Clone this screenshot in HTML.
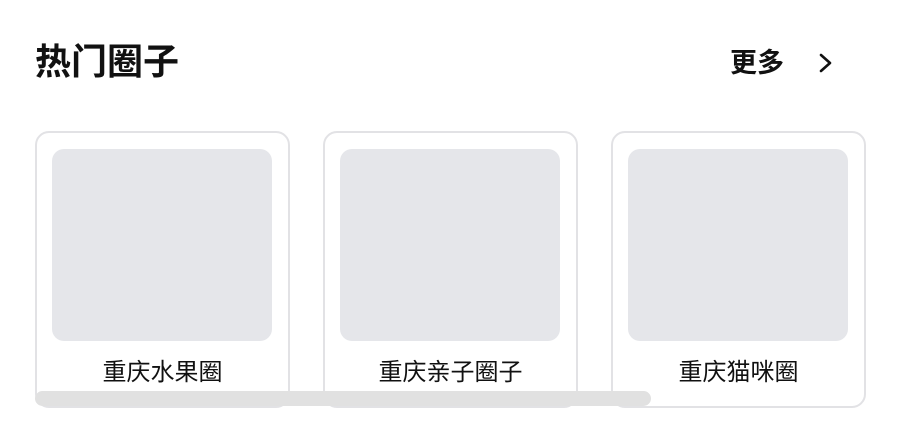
<!DOCTYPE html>
<html><head><meta charset="utf-8"><style>
body{margin:0;width:904px;height:436px;background:#fff;position:relative;overflow:hidden;font-family:"Liberation Sans","Noto Sans CJK SC",sans-serif;color:#111}
.t{position:absolute;left:35px;top:38px;font-size:36px;font-weight:bold;line-height:48px}
.m{position:absolute;left:730px;top:45px;font-size:27px;font-weight:bold;line-height:36px}
.card{position:absolute;top:131px;width:251px;height:273px;border:2px solid #e2e2e5;border-radius:14px;box-sizing:content-box}
.img{position:absolute;left:15px;top:16px;width:220px;height:192px;background:#e5e6ea;border-radius:12px}
.lb{position:absolute;left:0;right:0;top:223px;text-align:center;font-size:24px;line-height:34px}
.sb{position:absolute;left:35px;top:391px;width:616px;height:15px;background:#e1e1e1;border-radius:8px}
</style></head><body>
<div class="t">热门圈子</div>
<div class="m">更多</div>
<svg style="position:absolute;left:816px;top:52px" width="20" height="22" viewBox="0 0 20 22"><path d="M5 3 L14 11 L5 19" fill="none" stroke="#111" stroke-width="2.6" stroke-linecap="round" stroke-linejoin="round"/></svg>
<div class="card" style="left:35px"><div class="img"></div><div class="lb">重庆水果圈</div></div>
<div class="card" style="left:323px"><div class="img"></div><div class="lb">重庆亲子圈子</div></div>
<div class="card" style="left:611px"><div class="img"></div><div class="lb">重庆猫咪圈</div></div>
<div class="sb"></div>
</body></html>
